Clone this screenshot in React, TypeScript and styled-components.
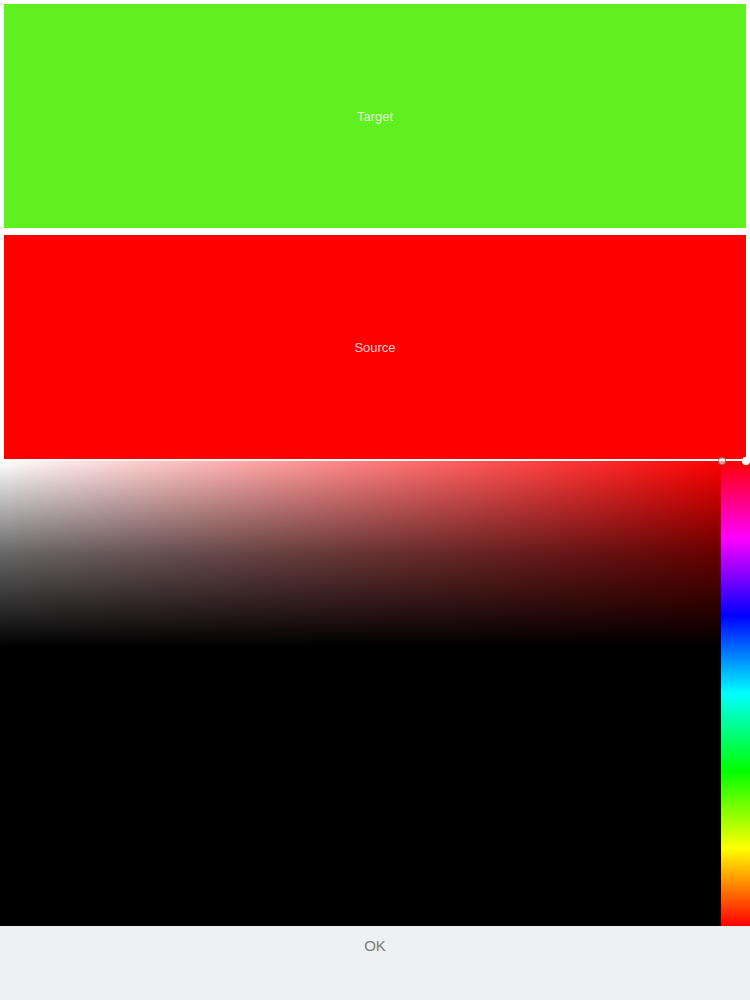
import React from 'react';
import styled, { createGlobalStyle } from 'styled-components';

const GlobalStyle = createGlobalStyle`
  html, body {
    margin: 0;
    padding: 0;
    background: #ffffff;
  }
  body {
    font-family: "Liberation Sans", Arial, sans-serif;
  }
`;

const Page = styled.div`
  width: 750px;
  height: 1000px;
  display: flex;
  flex-direction: column;
  overflow: hidden;
`;

const Swatches = styled.div`
  display: flex;
  flex-direction: column;
  gap: 7px;
  padding: 4px 4px 2px;
`;

const Swatch = styled.div<{ color: string }>`
  height: 224px;
  background: ${(p) => p.color};
  display: flex;
  align-items: center;
  justify-content: center;
  color: rgba(255, 255, 255, 0.8);
  font-size: 13px;
`;

const Picker = styled.div`
  position: relative;
  display: flex;
  height: 465px;
`;

const SatValArea = styled.div<{ hue: string }>`
  flex: 1;
  position: relative;
  background: linear-gradient(to right, #ffffff, ${(p) => p.hue});

  &::after {
    content: '';
    position: absolute;
    inset: 0;
    background: linear-gradient(to bottom, rgba(0, 0, 0, 0) 0%, rgba(0, 0, 0, 0.6) 20%, #000 40%, #000 100%);
  }
`;

const HueBar = styled.div`
  width: 29px;
  background: linear-gradient(
    to bottom,
    #ff0000 0%,
    #ff00ff 16.6%,
    #0000ff 33.3%,
    #00ffff 50%,
    #00ff00 66.6%,
    #ffff00 83.3%,
    #ff0000 100%
  );
`;

const Handle = styled.div<{ left: number; ring?: boolean }>`
  position: absolute;
  top: -4px;
  left: ${(p) => p.left}px;
  width: 8px;
  height: 8px;
  border-radius: 50%;
  background: ${(p) => (p.ring ? 'rgba(255,255,255,0.6)' : '#ffffff')};
  border: ${(p) => (p.ring ? '1px solid rgba(90,90,90,0.7)' : 'none')};
  box-sizing: border-box;
  z-index: 2;
`;

const Footer = styled.div`
  flex: 1;
  background: #eef0f1;
  display: flex;
  justify-content: center;
  align-items: flex-start;
  padding-top: 11px;
`;

const OkButton = styled.button`
  background: none;
  border: none;
  font-family: "Liberation Sans", Arial, sans-serif;
  font-size: 15px;
  color: #7b7b7b;
  cursor: pointer;
  padding: 0;
`;

export default function App() {
  return (
    <>
      <GlobalStyle />
      <Page>
        <Swatches>
          <Swatch color="#60f020">Target</Swatch>
          <Swatch color="#ff0000">Source</Swatch>
        </Swatches>
        <Picker>
          <SatValArea hue="#ff0000" />
          <HueBar />
          <Handle left={718} ring />
          <Handle left={742} />
        </Picker>
        <Footer>
          <OkButton>OK</OkButton>
        </Footer>
      </Page>
    </>
  );
}
